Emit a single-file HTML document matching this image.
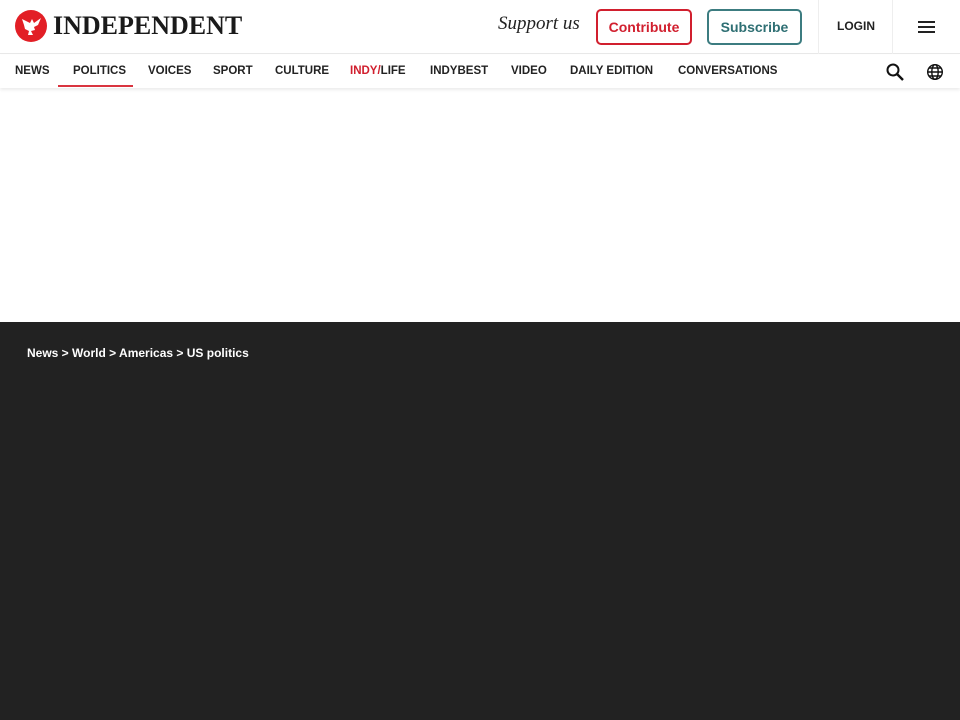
<!DOCTYPE html>
<html><head><meta charset="utf-8"><style>
*{margin:0;padding:0;box-sizing:border-box}
body{width:960px;height:720px;overflow:hidden;background:#fff;font-family:"Liberation Sans",sans-serif;position:relative}
.top{position:absolute;top:0;left:0;width:960px;height:54px;border-bottom:1px solid #e8e8e8}
.logo{position:absolute;left:15px;top:10px;width:32px;height:32px;border-radius:50%;background:#e21f26}
.brand{position:absolute;left:53px;top:11px;font-family:"Liberation Serif",serif;font-weight:bold;font-size:26px;color:#1a1a1a;letter-spacing:0}
.sup{position:absolute;left:498px;top:13px;font-family:"Liberation Serif",serif;font-style:italic;font-size:19px;color:#222}
.btn{position:absolute;top:9px;height:36px;border:2px solid;border-radius:5px;font-weight:bold;font-size:14px;text-align:center;line-height:32px}
.c{left:596px;width:96px;color:#d11f2e;border-color:#d11f2e}
.s{left:707px;width:95px;color:#2e6f73;border-color:#3c7c80}
.vl{position:absolute;top:0;width:1px;height:54px;background:#eee}
.login{position:absolute;left:837px;top:19px;font-size:12px;font-weight:bold;color:#222}
.nav{position:absolute;top:55px;left:0;width:960px;height:33px;box-shadow:0 2px 3px rgba(0,0,0,.08)}
.nav span{position:absolute;top:9px;line-height:14px;font-size:11.5px;font-weight:bold;color:#222}
.ul{position:absolute;left:58px;top:30px;width:75px;height:2px;background:#d9343f}
.dark{position:absolute;top:322px;left:0;width:960px;height:398px;background:#222}
.bc{position:absolute;left:27px;top:24px;color:#fff;font-size:12px;font-weight:bold}
</style></head><body>
<div class="top">
<div class="logo"><svg width="32" height="32" viewBox="0 0 32 32"><path d="M7 9l8 4 2-4 2 4 7-5-3 7-4 2 1 3-4 1 2 4h-5l1-4-4-2-1-4z" fill="#fff"/></svg></div>
<div class="brand">INDEPENDENT</div>
<div class="sup">Support us</div>
<div class="btn c">Contribute</div>
<div class="btn s">Subscribe</div>
<div class="vl" style="left:818px"></div>
<div class="login">LOGIN</div>
<div class="vl" style="left:892px"></div>
<svg style="position:absolute;left:918px;top:20px" width="18" height="14"><path d="M0 2h17M0 7h17M0 12h17" stroke="#222" stroke-width="2"/></svg>
</div>
<div class="nav">
<span style="left:15px">NEWS</span><span style="left:73px">POLITICS</span><span style="left:148px">VOICES</span><span style="left:213px">SPORT</span><span style="left:275px">CULTURE</span><span style="left:350px"><b style="color:#d11f2e">INDY/</b>LIFE</span><span style="left:430px">INDYBEST</span><span style="left:511px">VIDEO</span><span style="left:570px">DAILY EDITION</span><span style="left:678px">CONVERSATIONS</span>
<div class="ul"></div>
<svg style="position:absolute;left:886px;top:8px" width="19" height="19"><circle cx="7" cy="7" r="5.5" fill="none" stroke="#111" stroke-width="2"/><path d="M11 11l6 6" stroke="#111" stroke-width="2.4"/></svg>
<svg style="position:absolute;left:926px;top:8px" width="18" height="18" viewBox="0 0 18 18" fill="none" stroke="#111" stroke-width="1.4"><circle cx="9" cy="9" r="7.3"/><ellipse cx="9" cy="9" rx="3.2" ry="7.3"/><path d="M1.7 9h14.6M3 5h12M3 13h12"/></svg>
</div>
<div class="dark"><div class="bc">News &gt; World &gt; Americas &gt; US politics</div></div>
</body></html>
